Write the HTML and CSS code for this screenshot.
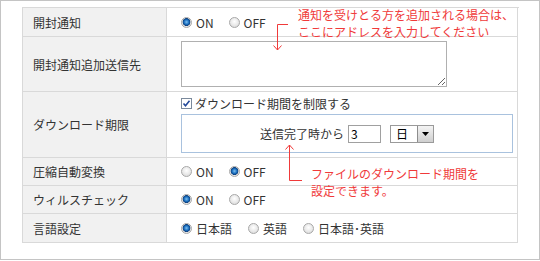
FILE: index.html
```
<!DOCTYPE html>
<html lang="ja">
<head>
<meta charset="utf-8">
<link rel="stylesheet" href="styles.css">
</head>
<body>
<div class="frame">
  <div class="grid">
    <div class="label">開封通知</div>
    <div class="value">
      <span class="opt"><span class="radio on"></span>ON</span>
      <span class="opt"><span class="radio"></span>OFF</span>
    </div>

    <div class="label">開封通知追加送信先</div>
    <div class="value"><textarea class="addr"></textarea></div>

    <div class="label">ダウンロード期限</div>
    <div class="value limit">
      <div class="check-line">
        <svg class="checkbox" width="11" height="11" viewBox="0 0 11 11"><rect x="0.5" y="0.5" width="10" height="10" fill="#fff" stroke="#7b8a9c"/><path d="M2.5 5.5 L4.5 7.8 L8.5 2.8" fill="none" stroke="#22489a" stroke-width="1.6"/></svg>
        ダウンロード期間を制限する
      </div>
      <div class="limit-box">
        <span>送信完了時から</span>
        <span class="num">3</span>
        <span class="select"><span class="sel-text">日</span><span class="sel-btn"><svg width="7" height="4" viewBox="0 0 7 4"><path d="M0 0 H7 L3.5 4 Z" fill="#000"/></svg></span></span>
      </div>
    </div>

    <div class="label">圧縮自動変換</div>
    <div class="value">
      <span class="opt"><span class="radio"></span>ON</span>
      <span class="opt"><span class="radio on"></span>OFF</span>
    </div>

    <div class="label">ウィルスチェック</div>
    <div class="value">
      <span class="opt"><span class="radio on"></span>ON</span>
      <span class="opt"><span class="radio"></span>OFF</span>
    </div>

    <div class="label">言語設定</div>
    <div class="value">
      <span class="opt lang"><span class="radio on"></span>日本語</span>
      <span class="opt lang"><span class="radio"></span>英語</span>
      <span class="opt lang"><span class="radio"></span>日本語･英語</span>
    </div>
  </div>

  <svg class="arrows" width="540" height="261" viewBox="0 0 540 261">
    <g fill="none" stroke="#f03a3a" stroke-width="1">
      <path d="M288 24.5 H277.5 V50"/>
      <path d="M273.5 45.5 L277.5 50 L281.5 45.5"/>
      <path d="M302 180.5 H289.5 V145"/>
      <path d="M285.5 149.5 L289.5 145 L293.5 149.5"/>
    </g>
  </svg>
  <div class="note note1">通知を受けとる方を追加される場合は、<br>ここにアドレスを入力してください</div>
  <div class="note note2">ファイルのダウンロード期間を<br>設定できます。</div>
</div>
</body>
</html>
```

FILE: styles.css
```
html, body {
  margin: 0;
  padding: 0;
  background: #fff;
}
body {
  font-family: "Noto Sans CJK JP", "Liberation Sans", sans-serif;
  font-size: 12px;
  color: #333;
}
.frame {
  position: relative;
  box-sizing: border-box;
  width: 540px;
  height: 260px;
  border: 1px solid #c4c4c4;
  padding: 6px 0 0 21px;
}
.grid {
  display: grid;
  grid-template-columns: 144px 351px;
  grid-template-rows: 29px 55px 66px 28px 28px 29px;
  width: 496px;
  border-top: 1px solid #d9d9d9;
  border-left: 1px solid #d9d9d9;
}
.label, .value {
  box-sizing: border-box;
  border-right: 1px solid #d9d9d9;
  border-bottom: 1px solid #d9d9d9;
  display: flex;
  align-items: center;
}
.label {
  background: #f1f1f1;
  padding-left: 10px;
}
.value {
  padding-left: 14px;
  gap: 0;
}
.opt {
  display: inline-flex;
  align-items: center;
  margin-right: 15px;
}
.opt.lang {
  margin-right: 16px;
}
.radio {
  box-sizing: border-box;
  width: 11px;
  height: 11px;
  border-radius: 50%;
  border: 1px solid #a8a8a8;
  background: radial-gradient(circle at 50% 40%, #ffffff 0%, #e6e6e6 60%, #d0d0d0 100%);
  margin-right: 4px;
}
.radio.on {
  background: radial-gradient(circle at 50% 45%, #7ec0f0 0%, #1a6fc0 35%, #0e3f7c 55%, #e8e8e8 62%, #d4d4d4 100%);
}
.addr {
  box-sizing: border-box;
  width: 266px;
  height: 46px;
  border: 1px solid #b0b0b0;
  margin: 0;
  padding: 2px;
  font: inherit;
  resize: both;
}
.limit {
  flex-direction: column;
  align-items: flex-start;
  justify-content: flex-start;
  padding-top: 3px;
}
.check-line {
  display: flex;
  align-items: center;
  height: 17px;
  gap: 3px;
}
.limit-box {
  box-sizing: border-box;
  margin-top: 2px;
  width: 332px;
  height: 39px;
  border: 1px solid #a9c2de;
  display: flex;
  align-items: center;
  justify-content: center;
}
.num {
  box-sizing: border-box;
  width: 33px;
  height: 18px;
  border: 1px solid #a0a0a0;
  margin-left: 4px;
  padding-left: 2px;
  line-height: 16px;
  color: #000;
}
.select {
  box-sizing: border-box;
  display: inline-flex;
  width: 44px;
  height: 18px;
  margin-left: 9px;
  border: 1px solid #9a9a9a;
  color: #000;
}
.sel-text {
  flex: 1;
  padding-left: 5px;
  line-height: 16px;
}
.sel-btn {
  width: 15px;
  display: flex;
  align-items: center;
  justify-content: center;
  background: linear-gradient(#f4f4f4, #cfcfcf);
  border-left: 1px solid #8d8d8d;
}
.arrows {
  position: absolute;
  left: -1px;
  top: -1px;
}
.note {
  position: absolute;
  color: #f03a3a;
  font-size: 12px;
  line-height: 17px;
  white-space: nowrap;
}
.note1 {
  left: 297px;
  top: 5px;
}
.note2 {
  left: 310px;
  top: 164px;
}
```
